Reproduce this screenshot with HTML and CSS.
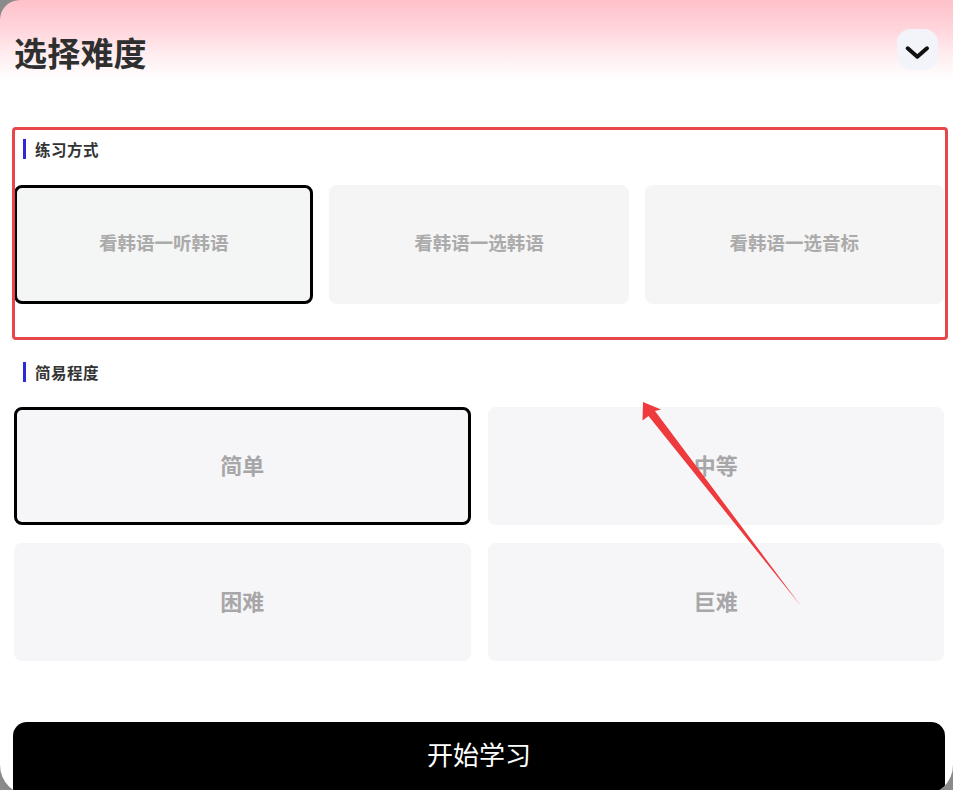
FILE: index.html
```html
<!DOCTYPE html>
<html lang="zh-CN">
<head>
<meta charset="utf-8">
<title>选择难度</title>
<link rel="stylesheet" href="styles.css">
</head>
<body>
<div class="panel">
  <header class="header">
    <h1 class="title">选择难度</h1>
    <button class="collapse" aria-label="收起">
      <svg width="41" height="41" viewBox="0 0 41 41"><path d="M10.7 19.3 L20.3 27.7 L30 19.3" fill="none" stroke="#111" stroke-width="4" stroke-linecap="round" stroke-linejoin="round"/></svg>
    </button>
  </header>

  <main class="content">
    <section class="section">
      <div class="section-head"><span class="bar"></span><span class="section-title">练习方式</span></div>
      <div class="grid three">
        <div class="card option selected">看韩语一听韩语</div>
        <div class="card option">看韩语一选韩语</div>
        <div class="card option">看韩语一选音标</div>
      </div>
    </section>

    <section class="section second">
      <div class="section-head"><span class="bar"></span><span class="section-title">简易程度</span></div>
      <div class="grid two">
        <div class="card level selected">简单</div>
        <div class="card level">中等</div>
        <div class="card level">困难</div>
        <div class="card level">巨难</div>
      </div>
    </section>
  </main>

  <button class="start">开始学习</button>

  <div class="highlight-box"></div>
  <svg class="arrow" width="953" height="795" viewBox="0 0 953 795">
    <polygon points="643,402 642.5,420.5 648.5,416 801,606 655,411 661,409.5" fill="#ee3a3d"/>
  </svg>
</div>
</body>
</html>
```

FILE: styles.css
```css
html, body {
  margin: 0;
  padding: 0;
  height: 790px;
  overflow: hidden;
}

body {
  background: #8a8a8a;
  font-family: "Noto Sans CJK SC", "Noto Sans", sans-serif;
}

.panel {
  position: relative;
  width: 953px;
  height: 795px;
  box-sizing: border-box;
  overflow: hidden;
  background: linear-gradient(180deg, #ffc1ca 0px, #ffd6dc 30px, #fff0f2 58px, #ffffff 80px);
  border-radius: 20px 0 30px 30px;
  display: flex;
  flex-direction: column;
}

.header {
  display: flex;
  justify-content: space-between;
  align-items: flex-start;
  padding: 0 15px 0 14px;
}

.title {
  margin: 32px 0 2px;
  font-size: 33px;
  line-height: 40px;
  font-weight: 700;
  color: #2f2f2f;
  letter-spacing: 0.2px;
}

.collapse {
  margin-top: 29px;
  width: 41px;
  height: 41px;
  padding: 0;
  border: none;
  border-radius: 14px;
  background: #f3f4fa;
  display: flex;
  align-items: center;
  justify-content: center;
}

.collapse svg {
  display: block;
}

.content {
  padding: 0 9px 0 14px;
}

.section {
  margin-top: 65px;
}

.section.second {
  margin-top: 58px;
}

.section-head {
  display: flex;
  align-items: center;
  height: 20px;
  padding-left: 9px;
}

.bar {
  width: 2.5px;
  height: 20px;
  background: #2a2ad6;
  margin-right: 9.5px;
}

.section-title {
  font-size: 15.5px;
  line-height: 20px;
  font-weight: 700;
  color: #333333;
  letter-spacing: 0.5px;
}

.grid {
  display: grid;
  margin-top: 26px;
}

.grid.three {
  grid-template-columns: repeat(3, 1fr);
  column-gap: 16px;
}

.grid.two {
  margin-top: 25px;
  grid-template-columns: repeat(2, 1fr);
  column-gap: 17px;
  row-gap: 18px;
}

.card {
  box-sizing: border-box;
  border-radius: 8px;
  display: flex;
  align-items: center;
  justify-content: center;
  font-weight: 700;
  color: #ababab;
}

.card.option {
  height: 119px;
  background: #f5f5f5;
  font-size: 18.5px;
  padding-bottom: 5px;
}

.card.level {
  height: 118px;
  background: #f6f6f8;
  font-size: 22px;
  color: #a7a7aa;
  padding-bottom: 4px;
}

.card.selected {
  border: 3px solid #000;
}

.card.option.selected {
  background: #f4f5f5;
}

.start {
  margin: auto 8px 0 13px;
  height: 73px;
  padding: 0 0 9px;
  border: none;
  border-radius: 14px 14px 0 0;
  background: #000;
  color: #fff;
  font-family: "Noto Sans CJK SC", "Noto Sans", sans-serif;
  font-size: 26px;
  font-weight: 400;
  line-height: 64px;
}

.highlight-box {
  position: absolute;
  left: 12px;
  top: 127px;
  width: 936px;
  height: 213px;
  box-sizing: border-box;
  border: 3px solid #e6474a;
  border-radius: 4px;
  pointer-events: none;
}

.arrow {
  position: absolute;
  left: 0;
  top: 0;
  pointer-events: none;
}
```
